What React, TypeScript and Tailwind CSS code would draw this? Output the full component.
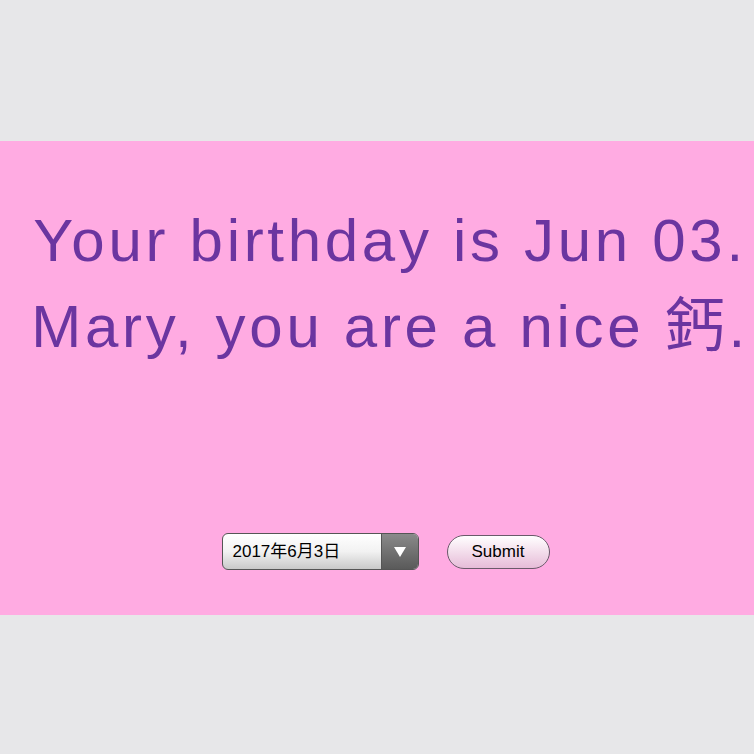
import React from "react";

export default function App() {
  return (
    <div
      className="w-[754px] h-[754px] bg-[#e7e7e9] flex flex-col overflow-hidden"
      style={{ fontFamily: '"Liberation Sans", Arial, "Noto Sans CJK TC", sans-serif' }}
    >
      <div className="h-[141px] shrink-0" />
      <div className="h-[474px] shrink-0 bg-[#ffabe2] flex flex-col items-center">
        <div className="pt-[56px] text-[60px] leading-[88px] tracking-[3.7px] text-[#6b35a0] text-center whitespace-nowrap pl-[26px]">
          <div className="h-[88px]">Your birthday is Jun 03.</div>
          <div className="h-[88px] -mt-[2px]">
            Mary, you are a nice{" "}
            <span className="leading-none" style={{ fontFamily: '"Noto Sans CJK TC", sans-serif' }}>
              鈣
            </span>
            .
          </div>
        </div>
        <div className="mt-[162px] flex items-center gap-[28px] pl-[17px]">
          <div className="w-[197px] h-[37px] rounded-[6px] border border-[#555] flex overflow-hidden bg-gradient-to-b from-[#ffffff] via-[#f2f2f2] to-[#c9c9c9]">
            <div
              className="flex-1 flex items-center pl-[10px] text-[17px] text-black"
              style={{ fontFamily: '"Liberation Sans", "Noto Sans CJK JP", sans-serif' }}
            >
              2017年6月3日
            </div>
            <div className="w-[37px] border-l border-[#555] bg-gradient-to-b from-[#8a8a8a] to-[#5a5a5a] flex items-center justify-center">
              <svg width="14" height="12" viewBox="0 0 14 12">
                <path d="M1 1 L13 1 L7 11 Z" fill="#ffffff" />
              </svg>
            </div>
          </div>
          <div className="w-[103px] h-[34px] rounded-full border border-[#6a5a6a] bg-gradient-to-b from-[#ffffff] to-[#e6bcd8] flex items-center justify-center text-[17px] text-black">
            Submit
          </div>
        </div>
      </div>
      <div className="flex-1" />
    </div>
  );
}
